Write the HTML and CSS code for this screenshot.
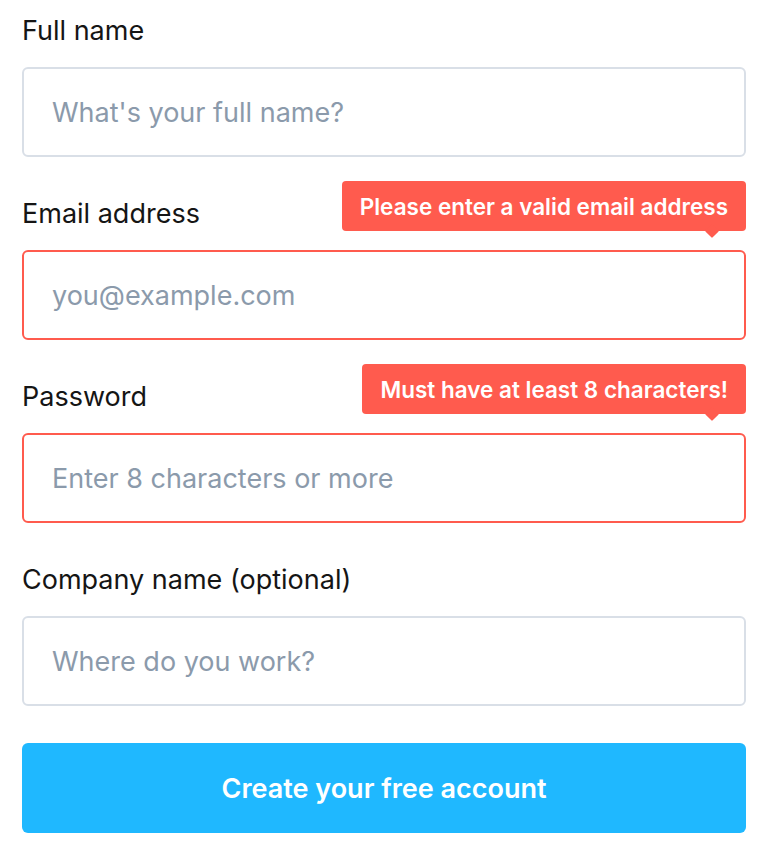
FILE: index.html
```html
<!DOCTYPE html>
<html lang="en">
<head>
<meta charset="utf-8">
<title>Sign up</title>
<link rel="stylesheet" href="styles.css">
</head>
<body>
<form class="signup">
  <div class="field">
    <label class="label" for="name">Full name</label>
    <input class="input" id="name" type="text" placeholder="What's your full name?">
  </div>
  <div class="field">
    <label class="label" for="email">Email address</label>
    <input class="input input-error" id="email" type="email" placeholder="you@example.com">
    <div class="tip">Please enter a valid email address</div>
  </div>
  <div class="field">
    <label class="label" for="pass">Password</label>
    <input class="input input-error" id="pass" type="password" placeholder="Enter 8 characters or more">
    <div class="tip">Must have at least 8 characters!</div>
  </div>
  <div class="field">
    <label class="label" for="company">Company name (optional)</label>
    <input class="input" id="company" type="text" placeholder="Where do you work?">
  </div>
  <button class="submit" type="button">Create your free account</button>
</form>
</body>
</html>
```
FILE: styles.css
```css
html, body {
  margin: 0;
  padding: 0;
  background: #ffffff;
}
body {
  font-family: Inter, "Noto Sans", sans-serif;
  color: #151515;
}
.signup {
  display: flex;
  flex-direction: column;
  padding: 15px 22px 0 22px;
}
.field {
  position: relative;
  display: flex;
  flex-direction: column;
  margin-bottom: 41px;
}
.label {
  font-size: 27px;
  line-height: 32px;
  font-weight: 400;
  margin-bottom: 20px;
  color: #151515;
}
.input {
  box-sizing: border-box;
  height: 90px;
  width: 100%;
  border: 2px solid #d9dfe7;
  border-radius: 6px;
  padding: 0 28px;
  font-family: inherit;
  font-size: 27px;
  color: #151515;
  background: #fff;
  outline: none;
}
.input::placeholder {
  color: #8b9aab;
}
.input-error {
  border-color: #ff5b4e;
}
.tip {
  position: absolute;
  right: 0;
  top: -17px;
  height: 50px;
  box-sizing: border-box;
  padding: 0 18px;
  display: flex;
  align-items: center;
  background: #ff5b4e;
  color: #fff;
  border-radius: 4px;
  font-size: 22.5px;
  font-weight: 600;
  white-space: nowrap;
}
.tip::after {
  content: "";
  position: absolute;
  right: 29px;
  bottom: -5px;
  width: 10px;
  height: 10px;
  background: #ff5b4e;
  transform: rotate(45deg);
  border-radius: 1px;
}
.submit {
  margin-top: -4px;
  height: 90px;
  width: 100%;
  border: none;
  border-radius: 6px;
  background: #1fb8ff;
  color: #fff;
  font-family: inherit;
  font-size: 27px;
  font-weight: 600;
  cursor: pointer;
}
```
